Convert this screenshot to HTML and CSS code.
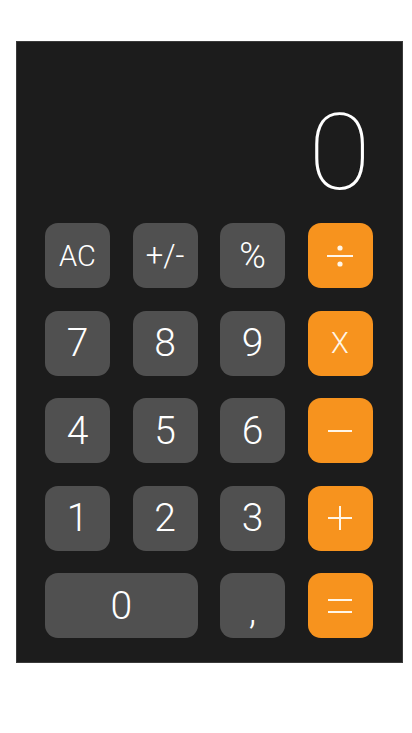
FILE: index.html
```html
<!DOCTYPE html>
<html>
<head>
<meta charset="utf-8">
<link rel="stylesheet" href="styles.css">
</head>
<body>
<div class="calc">
  <div class="display"><span class="value">0</span></div>
  <div class="keys">
    <button class="key fn ac">AC</button>
    <button class="key fn pm">+/-</button>
    <button class="key fn pct">%</button>
    <button class="key op"><svg width="26" height="26" viewBox="0 0 26 26"><line x1="0" y1="13" x2="26" y2="13"/><circle cx="13" cy="5" r="1.6"/><circle cx="13" cy="21" r="1.6"/></svg></button>
    <button class="key num">7</button>
    <button class="key num">8</button>
    <button class="key num">9</button>
    <button class="key op x">X</button>
    <button class="key num">4</button>
    <button class="key num">5</button>
    <button class="key num">6</button>
    <button class="key op"><svg width="24" height="24" viewBox="0 0 24 24"><line x1="0" y1="12" x2="24" y2="12"/></svg></button>
    <button class="key num">1</button>
    <button class="key num">2</button>
    <button class="key num">3</button>
    <button class="key op"><svg width="24" height="24" viewBox="0 0 24 24"><line x1="0" y1="12" x2="24" y2="12"/><line x1="12" y1="0" x2="12" y2="24"/></svg></button>
    <button class="key num zero">0</button>
    <button class="key num comma">,</button>
    <button class="key op"><svg width="24" height="24" viewBox="0 0 24 24"><line x1="0" y1="6" x2="24" y2="6"/><line x1="0" y1="18" x2="24" y2="18"/></svg></button>
  </div>
</div>
</body>
</html>
```
FILE: styles.css
```css
* { box-sizing: border-box; }
html, body { margin: 0; padding: 0; background: #ffffff; }
body { font-family: Roboto, "Helvetica Neue", Arial, sans-serif; }

.calc {
  margin: 41px 9px 0 16px;
  height: 622px;
  background: #1c1c1c;
  border: 1px solid #3a3a3a;
  display: flex;
  flex-direction: column;
}

.display {
  height: 181px;
  display: flex;
  justify-content: flex-end;
  align-items: flex-start;
  padding-right: 31px;
  padding-top: 58px;
}
.value {
  color: #ffffff;
  font-weight: 100;
  font-size: 106px;
  line-height: 106px;
  transform: scaleX(1.08);
  transform-origin: right center;
}

.keys {
  display: grid;
  grid-template-columns: repeat(4, 65px);
  grid-auto-rows: 65px;
  gap: 22.5px;
  padding-left: 28px;
}

.key {
  border: none;
  border-radius: 13px;
  background: #505050;
  color: #ffffff;
  font-family: Roboto, "Helvetica Neue", Arial, sans-serif;
  font-weight: 300;
  padding: 0;
  margin: 0;
  display: flex;
  align-items: center;
  justify-content: center;
}
.fn { font-size: 29px; }
.pm { font-size: 31px; }
.pct { font-size: 36px; }
.num { font-size: 39px; }
.zero { grid-column: span 2; }
.comma { padding-top: 10px; }
.op {
  background: #f7931e;
  color: #fff6e8;
}
.op.x { font-size: 29px; }
.op svg { stroke: #fff6e8; stroke-width: 2; fill: #fff6e8; display: block; }
.op svg line { fill: none; }
```
